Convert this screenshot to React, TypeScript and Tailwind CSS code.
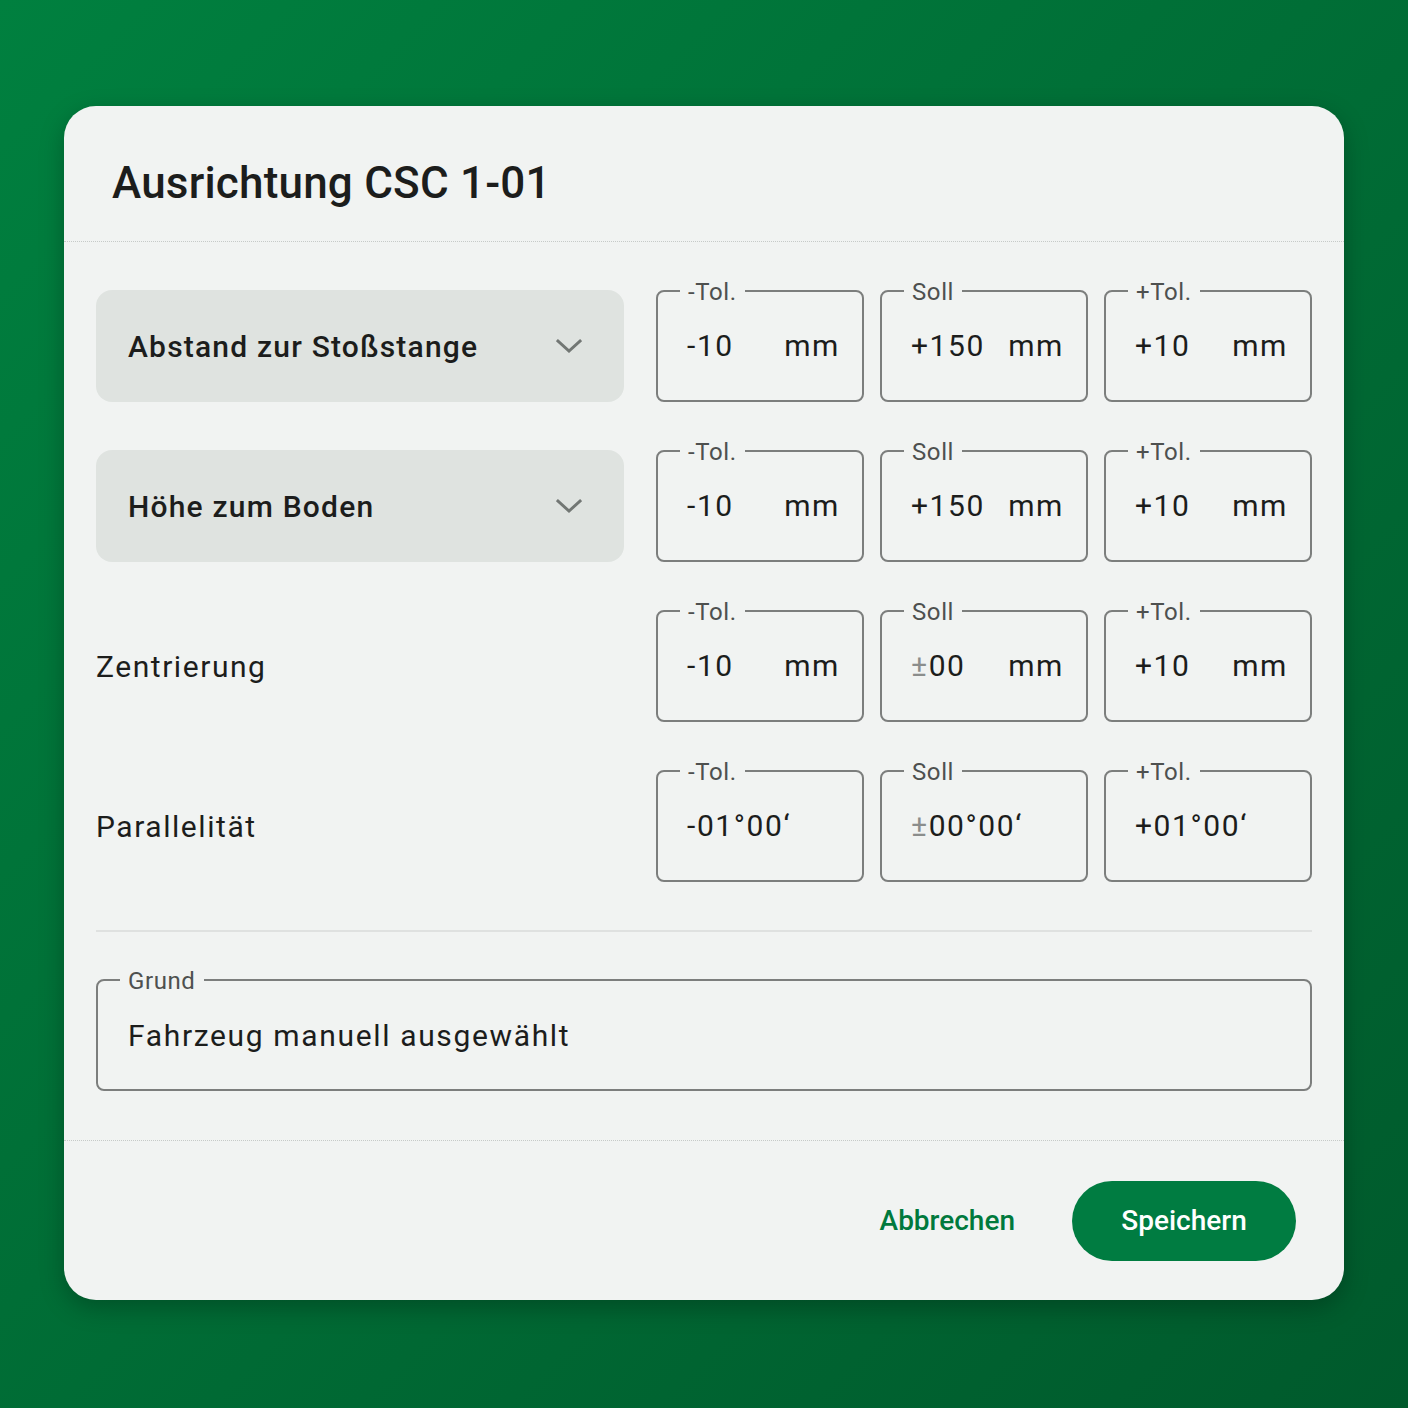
import React from "react";

type FieldProps = { label: string; value: React.ReactNode; unit?: string };

function Field({ label, value, unit }: FieldProps) {
  return (
    <div className="relative h-[112px] w-[208px] rounded-lg border-2 border-[#7c7e7d] flex items-center justify-between pl-[29px] pr-[22px]">
      <span className="absolute left-[22px] top-0 -translate-y-1/2 bg-[#f1f3f2] pl-[8px] pr-[8px] text-[24px] leading-none text-[#4e504f] tracking-[0.6px]">
        {label}
      </span>
      <span className="text-[30px] leading-none text-[#1c1d1c] tracking-[1.6px]">{value}</span>
      {unit && <span className="text-[30px] leading-none text-[#1c1d1c] tracking-[1.6px]">{unit}</span>}
    </div>
  );
}

function PM({ rest }: { rest: string }) {
  return (
    <>
      <span className="text-[#8b8d8c]">±</span>
      {rest}
    </>
  );
}

function Chevron() {
  return (
    <svg width="26" height="16" viewBox="0 0 26 16" fill="none">
      <polyline points="2,3 13,13 24,3" stroke="#727774" strokeWidth="3" strokeLinecap="square" strokeLinejoin="miter" />
    </svg>
  );
}

function SelectBox({ text }: { text: string }) {
  return (
    <div className="h-[112px] w-[528px] rounded-2xl bg-[#dfe3e0] flex items-center justify-between pl-[32px] pr-[42px]">
      <span className="text-[30px] font-medium text-[#1c1d1c] tracking-[1.2px]">{text}</span>
      <Chevron />
    </div>
  );
}

function PlainLabel({ text }: { text: string }) {
  return (
    <div className="h-[112px] w-[528px] flex items-center">
      <span className="text-[30px] text-[#1c1d1c] tracking-[1.55px]">{text}</span>
    </div>
  );
}

export default function App() {
  return (
    <div
      className="w-full h-[1408px] bg-linear-to-br from-[#00803f] to-[#005a2c] pt-[106px] pl-[64px]"
      style={{ fontFamily: "Roboto, 'Noto Sans', sans-serif" }}
    >
      <div className="w-[1280px] rounded-[32px] bg-[#f1f3f2] shadow-[0_8px_24px_rgba(0,0,0,0.25)] overflow-hidden">
        <div className="h-[136px] px-[48px] pt-[18px] flex items-center border-b border-dotted border-[#c6cac8]">
          <h1 className="text-[44px] font-medium text-[#1c1d1c] leading-none tracking-[0.2px]">Ausrichtung CSC 1-01</h1>
        </div>

        <div className="px-[32px] pt-[48px] pb-[49px]">
          <div className="flex flex-col gap-[48px]">
            <div className="flex items-center gap-[32px]">
              <SelectBox text="Abstand zur Stoßstange" />
              <div className="flex gap-[16px]">
                <Field label="-Tol." value="-10" unit="mm" />
                <Field label="Soll" value="+150" unit="mm" />
                <Field label="+Tol." value="+10" unit="mm" />
              </div>
            </div>
            <div className="flex items-center gap-[32px]">
              <SelectBox text="Höhe zum Boden" />
              <div className="flex gap-[16px]">
                <Field label="-Tol." value="-10" unit="mm" />
                <Field label="Soll" value="+150" unit="mm" />
                <Field label="+Tol." value="+10" unit="mm" />
              </div>
            </div>
            <div className="flex items-center gap-[32px]">
              <PlainLabel text="Zentrierung" />
              <div className="flex gap-[16px]">
                <Field label="-Tol." value="-10" unit="mm" />
                <Field label="Soll" value={<PM rest="00" />} unit="mm" />
                <Field label="+Tol." value="+10" unit="mm" />
              </div>
            </div>
            <div className="flex items-center gap-[32px]">
              <PlainLabel text="Parallelität" />
              <div className="flex gap-[16px]">
                <Field label="-Tol." value="-01°00‘" />
                <Field label="Soll" value={<PM rest="00°00‘" />} />
                <Field label="+Tol." value="+01°00‘" />
              </div>
            </div>
          </div>

          <div className="mt-[48px] h-[2px] bg-[#dfe1e0]" />

          <div className="mt-[47px] relative h-[112px] rounded-lg border-2 border-[#7c7e7d] flex items-center pl-[30px]">
            <span className="absolute left-[22px] top-0 -translate-y-1/2 bg-[#f1f3f2] pl-[8px] pr-[8px] text-[24px] leading-none text-[#4e504f] tracking-[0.6px]">
              Grund
            </span>
            <span className="text-[30px] text-[#1c1d1c] tracking-[1.65px]">Fahrzeug manuell ausgewählt</span>
          </div>
        </div>

        <div className="h-[160px] border-t border-dotted border-[#c6cac8] flex items-center justify-end px-[48px] gap-[57px]">
          <button className="text-[28px] font-medium text-[#00793d]">Abbrechen</button>
          <button className="h-[80px] w-[224px] rounded-full bg-[#007c41] text-[28px] font-medium text-white">
            Speichern
          </button>
        </div>
      </div>
    </div>
  );
}
